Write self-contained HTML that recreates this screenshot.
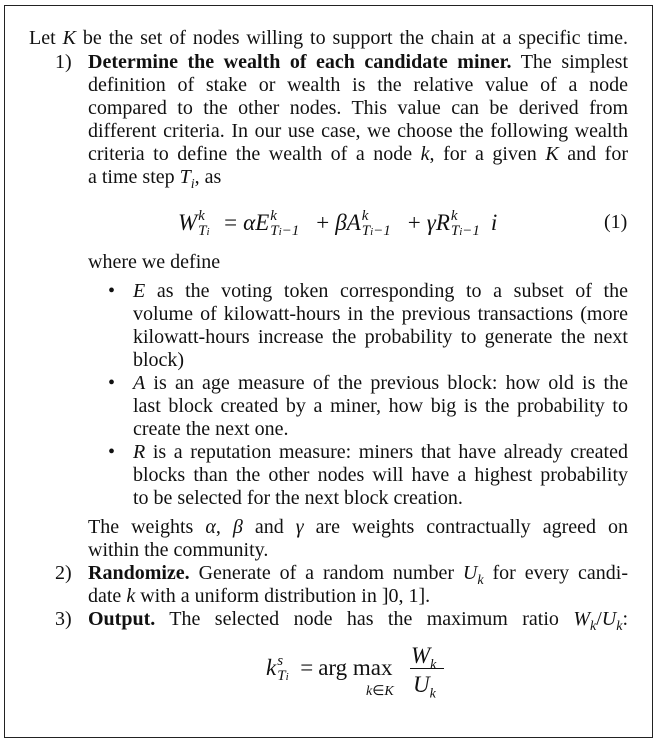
<!DOCTYPE html>
<html><head><meta charset="utf-8"><style>
body{margin:0;width:658px;height:743px;background:#fff;position:relative;font-family:"Liberation Serif",serif;font-size:20px;color:#111;}
.box{position:absolute;left:4px;top:5px;width:647px;height:731px;border:1px solid #222;}
.l{position:absolute;height:23px;line-height:23px;white-space:nowrap;}
.j{text-align:justify;text-align-last:justify;white-space:normal;}
i{font-style:italic}
sub{font-size:14px;line-height:0}
.ss{display:inline-block;position:relative;height:10px;font-size:15px;line-height:15px;font-style:italic;margin-left:1px}
.ss .u{position:absolute;left:0;top:-11px}
.ss .d{position:absolute;left:0;top:4px;white-space:nowrap}
.ss small{font-size:11px}
.eq{font-size:23px}
.op{margin:0 6px}
</style></head><body>
<div class="box"></div>
<div class="l j" style="left:29px;top:27px;width:599px">Let <i>K</i> be the set of nodes willing to support the chain at a specific time.</div>
<div class="l" style="left:55px;top:51px">1)</div>
<div class="l j" style="left:88px;top:51px;width:540px"><b>Determine the wealth of each candidate miner.</b> The simplest</div>
<div class="l j" style="left:88px;top:74px;width:540px">definition of stake or wealth is the relative value of a node</div>
<div class="l j" style="left:88px;top:97px;width:540px">compared to the other nodes. This value can be derived from</div>
<div class="l j" style="left:88px;top:120px;width:540px">different criteria. In our use case, we choose the following wealth</div>
<div class="l j" style="left:88px;top:143px;width:540px">criteria to define the wealth of a node <i>k</i>, for a given <i>K</i> and for</div>
<div class="l" style="left:88px;top:166px">a time step <i>T<sub>i</sub></i>, as</div>
<div class="l eq" style="left:178px;top:211px"><i>W</i><span class="ss" style="width:20px"><span class="u">k</span><span class="d">T<small>i</small></span></span><span class="op">=</span><i>αE</i><span class="ss" style="width:40px"><span class="u">k</span><span class="d">T<small>i</small>−1</span></span><span class="op">+</span><i>βA</i><span class="ss" style="width:40px"><span class="u">k</span><span class="d">T<small>i</small>−1</span></span><span class="op">+</span><i>γR</i><span class="ss" style="width:40px"><span class="u">k</span><span class="d">T<small>i</small>−1</span></span><i>i</i></div>
<div class="l" style="left:604px;top:211px">(1)</div>
<div class="l" style="left:88px;top:251px">where we define</div>
<div class="l" style="left:108px;top:280px">•</div>
<div class="l j" style="left:133px;top:280px;width:495px"><i>E</i> as the voting token corresponding to a subset of the</div>
<div class="l j" style="left:133px;top:303px;width:495px">volume of kilowatt-hours in the previous transactions (more</div>
<div class="l j" style="left:133px;top:326px;width:495px">kilowatt-hours increase the probability to generate the next</div>
<div class="l" style="left:133px;top:349px">block)</div>
<div class="l" style="left:108px;top:372px">•</div>
<div class="l j" style="left:133px;top:372px;width:495px"><i>A</i> is an age measure of the previous block: how old is the</div>
<div class="l j" style="left:133px;top:395px;width:495px">last block created by a miner, how big is the probability to</div>
<div class="l" style="left:133px;top:418px">create the next one.</div>
<div class="l" style="left:108px;top:441px">•</div>
<div class="l j" style="left:133px;top:441px;width:495px"><i>R</i> is a reputation measure: miners that have already created</div>
<div class="l j" style="left:133px;top:464px;width:495px">blocks than the other nodes will have a highest probability</div>
<div class="l" style="left:133px;top:487px">to be selected for the next block creation.</div>
<div class="l j" style="left:88px;top:516px;width:540px">The weights <i>α</i>, <i>β</i> and <i>γ</i> are weights contractually agreed on</div>
<div class="l" style="left:88px;top:539px">within the community.</div>
<div class="l" style="left:55px;top:562px">2)</div>
<div class="l j" style="left:88px;top:562px;width:540px"><b>Randomize.</b> Generate of a random number <i>U<sub>k</sub></i> for every candi-</div>
<div class="l" style="left:88px;top:585px">date <i>k</i> with a uniform distribution in ]0, 1].</div>
<div class="l" style="left:55px;top:608px">3)</div>
<div class="l j" style="left:88px;top:608px;width:540px"><b>Output.</b> The selected node has the maximum ratio <i>W<sub>k</sub></i>/<i>U<sub>k</sub></i>:</div>
<div class="l eq" style="left:266px;top:656px"><i>k</i><span class="ss" style="width:18px"><span class="u">s</span><span class="d">T<small>i</small></span></span><span class="op" style="margin:0 5px">=</span>arg max</div>
<div class="l" style="left:366px;top:680px;font-size:14px"><i>k</i>∈<i>K</i></div>
<div class="l eq" style="left:411px;top:644px"><i>W<sub>k</sub></i></div>
<div style="position:absolute;left:410px;top:668px;width:34px;border-top:1px solid #111"></div>
<div class="l eq" style="left:413px;top:673px"><i>U<sub>k</sub></i></div>
</body></html>
